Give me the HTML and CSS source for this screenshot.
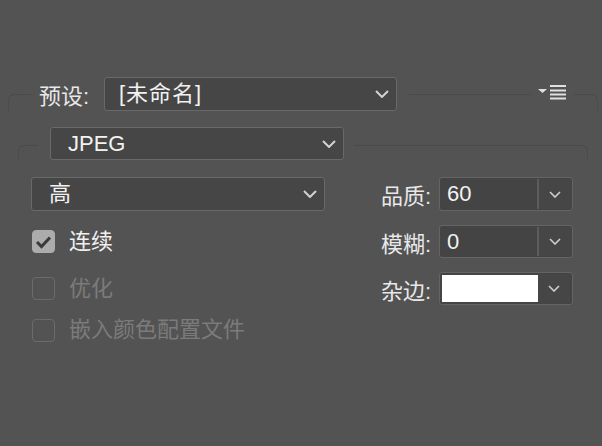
FILE: index.html
```html
<!DOCTYPE html>
<html lang="zh">
<head>
<meta charset="utf-8">
<link rel="stylesheet" href="styles.css">
</head>
<body>
<div class="panel">
  <div class="row row-preset">
    <div class="bracket bracket-l b1"></div>
    <span class="label preset-label">预设:</span>
    <div class="dropdown dd-preset"><span class="dd-text">[未命名]</span><svg class="chev" width="14" height="8" viewBox="0 0 14 8"><path d="M1 1 L7 7 L13 1" fill="none" stroke="#d2d2d2" stroke-width="2"/></svg></div>
    <div class="line line1"></div>
    <svg class="menu-icon" width="29" height="16" viewBox="0 0 29 16"><path d="M0 4 H9 L4.5 8 Z" fill="#e0e0e0"/><rect x="12" y="0" width="16" height="2" fill="#e0e0e0"/><rect x="12" y="4.5" width="16" height="2" fill="#e0e0e0"/><rect x="12" y="8.5" width="16" height="2" fill="#e0e0e0"/><rect x="12" y="12.5" width="16" height="2" fill="#e0e0e0"/></svg>
    <div class="bracket bracket-r r1"></div>
  </div>
  <div class="row row-format">
    <div class="bracket bracket-l b2"></div>
    <div class="dropdown dd-format"><span class="dd-text">JPEG</span><svg class="chev" width="14" height="8" viewBox="0 0 14 8"><path d="M1 1 L7 7 L13 1" fill="none" stroke="#d2d2d2" stroke-width="2"/></svg></div>
    <div class="bracket bracket-r r2"></div>
  </div>
  <div class="grid">
    <div class="dropdown dd-quality"><span class="dd-text">高</span><svg class="chev" width="14" height="8" viewBox="0 0 14 8"><path d="M1 1 L7 7 L13 1" fill="none" stroke="#d2d2d2" stroke-width="2"/></svg></div>
    <div class="field-row">
      <span class="label">品质:</span>
      <div class="field"><span class="field-val">60</span><span class="field-btn"><svg width="12" height="7" viewBox="0 0 12 7"><path d="M1 1 L6 6 L11 1" fill="none" stroke="#cfcfcf" stroke-width="1.6"/></svg></span></div>
    </div>
    <div class="check-row">
      <span class="box checked"><svg width="17" height="14" viewBox="0 0 17 14"><path d="M2 7 L6.5 11.5 L15 2.5" fill="none" stroke="#3a3a3a" stroke-width="3"/></svg></span>
      <span class="check-label">连续</span>
    </div>
    <div class="field-row">
      <span class="label">模糊:</span>
      <div class="field"><span class="field-val">0</span><span class="field-btn"><svg width="12" height="7" viewBox="0 0 12 7"><path d="M1 1 L6 6 L11 1" fill="none" stroke="#cfcfcf" stroke-width="1.6"/></svg></span></div>
    </div>
    <div class="check-row disabled">
      <span class="box"></span>
      <span class="check-label">优化</span>
    </div>
    <div class="field-row">
      <span class="label">杂边:</span>
      <div class="field"><span class="field-val swatch"></span><span class="field-btn"><svg width="12" height="7" viewBox="0 0 12 7"><path d="M1 1 L6 6 L11 1" fill="none" stroke="#cfcfcf" stroke-width="1.6"/></svg></span></div>
    </div>
    <div class="check-row disabled">
      <span class="box"></span>
      <span class="check-label">嵌入颜色配置文件</span>
    </div>
  </div>
</div>
</body>
</html>
```
FILE: styles.css
```css
html, body {
  margin: 0;
  padding: 0;
  background: #535353;
  width: 602px;
  height: 446px;
  overflow: hidden;
  font-family: "Liberation Sans", "Noto Sans CJK SC", sans-serif;
  font-size: 22px;
  color: #e8e8e8;
}

.panel {
  padding-top: 77px;
}

.row {
  display: flex;
  align-items: center;
  height: 34px;
}

.bracket {
  align-self: stretch;
  margin-top: 17px;
  border-top: 1px solid #4a4a4a;
}
.bracket-l {
  border-left: 1px solid #4c4c4c;
  border-top-left-radius: 6px;
}
.bracket-r {
  border-right: 1px solid #4c4c4c;
  border-top-right-radius: 6px;
}
.b1 { margin-left: 8px; width: 22px; }
.r1 { margin-left: 7px; width: 23px; }
.b2 { margin-left: 18px; width: 19px; margin-top: 18px; }
.r2 { margin-left: 10px; width: 233px; margin-top: 18px; }

.line {
  align-self: stretch;
  margin-top: 17px;
  border-top: 1px solid #4a4a4a;
}
.line1 { margin-left: 12px; width: 122px; }

.label {
  color: #e8e8e8;
  white-space: nowrap;
}
.preset-label {
  margin-left: 8px;
  width: 65px;
}

.menu-icon {
  margin-left: 7px;
  margin-top: -2px;
}

.dropdown {
  box-sizing: border-box;
  height: 34px;
  border: 1px solid #696969;
  border-radius: 3px;
  background: #464646;
  display: flex;
  align-items: center;
  justify-content: space-between;
  color: #f2f2f2;
}
.dd-text {
  line-height: 1;
}
.dd-preset .dd-text {
  letter-spacing: 1px;
}
.chev {
  margin-right: 7px;
}
.dd-preset {
  width: 293px;
  padding-left: 14px;
}
.dd-format {
  width: 294px;
  margin-left: 12px;
  padding-left: 17px;
}
.row-format {
  margin-top: 16px;
  height: 33px;
}
.row-format .dropdown { height: 33px; }

.grid {
  display: grid;
  grid-template-columns: 294px 192px;
  grid-template-rows: 34px 33px 33px 22px;
  column-gap: 56px;
  row-gap: 14px;
  margin-top: 17px;
  margin-left: 31px;
}
.dd-quality {
  padding-left: 17px;
}

.field-row {
  display: flex;
  align-items: center;
  height: 100%;
}
.field-row .label {
  width: 58px;
}
.field {
  box-sizing: border-box;
  width: 134px;
  height: 100%;
  border: 1px solid #646464;
  border-radius: 3px;
  background: #444444;
  display: flex;
  padding: 1px;
}
.field-val {
  flex: 1;
  display: flex;
  align-items: center;
  padding-left: 6px;
  color: #f2f2f2;
  border-right: 2px solid #5c5c5c;
}
.field-val.swatch {
  background: #ffffff;
  margin: 1px 0 1px 1px;
  padding: 0;
  border-right: none;
  flex: none;
  width: 96px;
}
.field-btn {
  width: 32px;
  display: flex;
  align-items: center;
  justify-content: center;
  background: #464646;
}

.check-row {
  display: flex;
  align-items: center;
  height: 100%;
  line-height: 1;
}
.box {
  box-sizing: border-box;
  width: 23px;
  height: 23px;
  flex: none;
  margin-left: 1px;
  border-radius: 4px;
  border: 1px solid #6b6b6b;
  display: flex;
  align-items: center;
  justify-content: center;
}
.box.checked {
  background: #acacac;
  border-color: #acacac;
}
.check-label {
  margin-left: 14px;
  color: #f0f0f0;
}
.disabled .check-label {
  color: #7b7b7b;
}
```
